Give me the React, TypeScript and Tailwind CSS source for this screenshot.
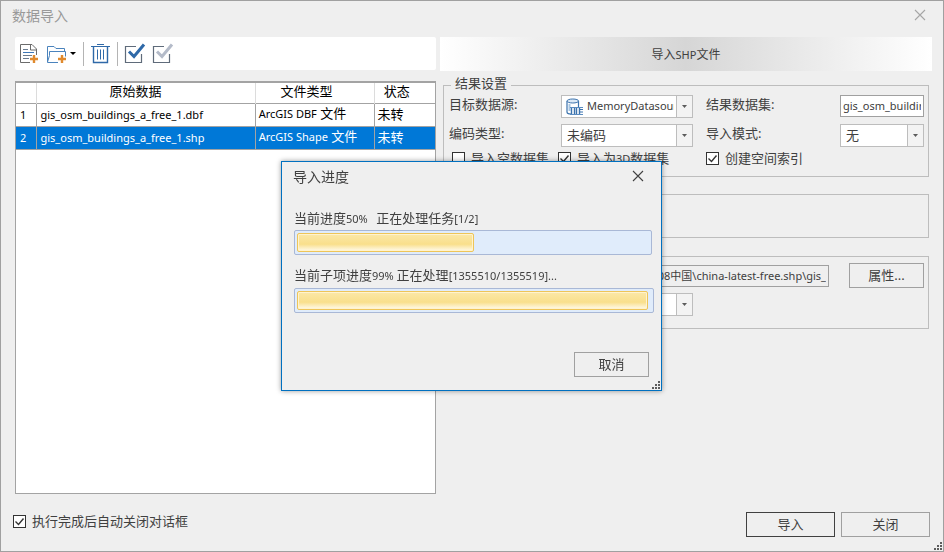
import type { ReactNode } from "react";

const ROWS = [
  { id: 1, name: "gis_osm_buildings_a_free_1.dbf", format: "ArcGIS DBF", state: "未转", selected: false },
  { id: 2, name: "gis_osm_buildings_a_free_1.shp", format: "ArcGIS Shape", state: "未转", selected: true },
];

function CloseIcon() {
  return (
    <svg width="12" height="12" viewBox="0 0 12 12" fill="none" stroke="currentColor" strokeWidth="1.1" aria-hidden="true">
      <path d="M1 1l10 10M11 1L1 11" />
    </svg>
  );
}

function AddFileIcon() {
  return (
    <svg width="22" height="22" viewBox="0 0 22 22" fill="none" aria-hidden="true">
      <path d="M12 19.5H2.5v-18H14L18.5 6v6" stroke="#6b6b6b" />
      <path d="M12.5 1.5v5.5h6" stroke="#6b6b6b" />
      <path d="M5 6.5h5M5 12.5h9M5 15.5h6" stroke="#6b7c90" />
      <path d="M5 9.5h11" stroke="#3d78b8" />
      <path d="M16 12v8M12 16h8" stroke="#e08a2e" strokeWidth="2.4" />
    </svg>
  );
}

function AddFolderIcon() {
  return (
    <svg width="22" height="22" viewBox="0 0 22 22" fill="none" aria-hidden="true">
      <path d="M12 19.5H1.5v-16h6.5l2 2h8.5V8" stroke="#4a83bd" />
      <path d="M1.5 19L3.5 12.5V8.5h16v5" stroke="#4a83bd" />
      <path d="M16 12v8M12 16h8" stroke="#e08a2e" strokeWidth="2.4" />
    </svg>
  );
}

function TrashIcon() {
  return (
    <svg width="22" height="22" viewBox="0 0 22 22" fill="none" stroke="#2f69a8" aria-hidden="true">
      <path d="M1 3.5h19M7 1.5h7" />
      <path d="M3.5 4v15.5h14V4" strokeWidth="1.4" />
      <path d="M7.5 6.5v10M10.5 6.5v10M13.5 6.5v10" />
    </svg>
  );
}

function TickBoxIcon({ tick }: { tick: string }) {
  return (
    <svg width="22" height="22" viewBox="0 0 22 22" fill="none" aria-hidden="true">
      <path d="M12 3.5H1.5v16h16V11" stroke="#5f6b7a" strokeWidth="1.2" />
      <path d="M5 8.5l5 5L20 1.5" stroke={tick} strokeWidth="3" />
    </svg>
  );
}

function DatabaseIcon() {
  return (
    <svg width="18" height="18" viewBox="0 0 18 18" fill="none" aria-hidden="true">
      <path d="M1 3v11c0 1 1 2 4 2" stroke="#3c73ad" strokeWidth="1.2" />
      <path d="M12.5 3v6" stroke="#3c73ad" strokeWidth="1.2" />
      <ellipse cx="6.8" cy="3" rx="5.8" ry="2" fill="#dce9f6" stroke="#3c73ad" />
      <path d="M3.5 6v7" stroke="#a9c6e2" strokeWidth="2" />
      <path d="M4 9.5h13M4 16.5h13" stroke="#5b8cc0" />
      <path d="M5.5 10v6M8.5 10v6M10.5 10v6M13.5 10v6" stroke="#3c73ad" strokeWidth="1.4" />
      <path d="M14 11.5h3M14 14h3" stroke="#3c73ad" />
    </svg>
  );
}

function Grip() {
  return (
    <svg className="absolute right-0 bottom-0" width="9" height="9" viewBox="0 0 9 9" fill="#5c5c5c" aria-hidden="true">
      <path d="M6 0h2v2H6zM3 3h2v2H3zM6 3h2v2H6zM0 6h2v2H0zM3 6h2v2H3zM6 6h2v2H6z" />
    </svg>
  );
}

function Check({ label, checked = false }: { label: ReactNode; checked?: boolean }) {
  return (
    <label className="flex items-center gap-[6px] text-[13px] leading-[13px] whitespace-nowrap">
      <span className="relative flex">
        <input
          type="checkbox"
          defaultChecked={checked}
          className="peer size-[13px] appearance-none border border-[#333333] bg-white"
        />
        <svg
          className="pointer-events-none invisible absolute inset-0 peer-checked:visible"
          width="13"
          height="13"
          viewBox="0 0 13 13"
          fill="none"
          stroke="#333333"
          strokeWidth="1.4"
          aria-hidden="true"
        >
          <path d="M2.5 6.5l3 3 5-6" />
        </svg>
      </span>
      {label}
    </label>
  );
}

function Combo({ id, label, value, icon, latin = false }: { id: string; label?: string; value: string; icon?: ReactNode; latin?: boolean }) {
  return (
    <div className="flex h-[23px] min-w-0 border border-[#bdbdbd] bg-white">
      {icon && <span className="flex shrink-0 items-center pl-1">{icon}</span>}
      <select
        id={id}
        aria-label={label}
        className={`mr-[2px] min-w-0 flex-1 appearance-none overflow-hidden bg-transparent pb-[2px] outline-none ${icon ? "pl-[3px]" : "pl-[5px]"} ${latin ? "text-[11px]" : "text-[13px]"}`}
      >
        <option>{value}</option>
      </select>
      <span className="pointer-events-none flex w-4 shrink-0 items-center justify-center border-l border-[#bdbdbd] bg-[#f3f3f3]">
        <svg width="5" height="3" viewBox="0 0 5 3" fill="#5c5c5c" aria-hidden="true">
          <path d="M0 0h5L2.5 3z" />
        </svg>
      </span>
    </div>
  );
}

function ProgressBar({ label, width, fill, now }: { label: string; width: string; fill: string; now: number }) {
  return (
    <div
      role="progressbar"
      aria-label={label}
      aria-valuenow={now}
      aria-valuemin={0}
      aria-valuemax={100}
      className={`flex h-[25px] rounded-[2px] border border-[#a9b8d6] bg-[#e0ecfb] p-[2px] ${width}`}
    >
      <div
        className={`rounded-[2px] border border-[#eec558] bg-linear-to-b from-[#fbe8a8] via-[#f9df8b] via-60% to-[#fffaea] shadow-[inset_0_0_0_1px_#fff3cf] ${fill}`}
      />
    </div>
  );
}

export default function App() {
  return (
    <div className="relative flex min-h-screen flex-col border border-[#a0a0a0] bg-[#efefef] pr-[11px] pl-[14px] font-['Noto_Sans','Noto_Sans_CJK_SC',sans-serif] text-[13px] text-[#404040]">
      <header className="-ml-[3px] flex h-9 items-start justify-between pt-[5px] text-[14px] leading-[20px] text-[#999999]">
        <h1>数据导入</h1>
        <button type="button" aria-label="关闭窗口" className="mt-[3px] mr-[6px] text-[#a6a6a6]">
          <CloseIcon />
        </button>
      </header>

      <main className="grid flex-1 grid-cols-[minmax(0,421fr)_minmax(0,492fr)] gap-1">
        <section className="flex flex-col">
          <div className="flex h-[33px] items-center rounded-[2px] bg-white pl-[3px]">
            <button type="button" aria-label="添加文件"><AddFileIcon /></button>
            <button type="button" aria-label="添加文件夹" className="ml-[6px] flex items-center gap-[2px]">
              <AddFolderIcon />
              <svg width="6" height="3" viewBox="0 0 6 3" aria-hidden="true"><path d="M0 0h6L3 3z" /></svg>
            </button>
            <span className="ml-[7px] h-6 w-px bg-[#b4b4b4]" />
            <button type="button" aria-label="删除" className="ml-[6px]"><TrashIcon /></button>
            <span className="ml-[5px] h-6 w-px bg-[#b4b4b4]" />
            <button type="button" aria-label="全选" className="ml-[6px]"><TickBoxIcon tick="#2f69a8" /></button>
            <button type="button" aria-label="反选" className="ml-[6px]"><TickBoxIcon tick="#b4bbc9" /></button>
          </div>

          <div className="mt-[11px] flex-1 border border-t-2 border-[#a3a3a3] bg-white">
            <table className="w-full table-fixed border-collapse text-left text-black">
              <colgroup>
                <col className="w-[20px]" />
                <col className="w-[52.3%]" />
                <col className="w-[28.4%]" />
                <col />
              </colgroup>
              <thead>
                <tr className="h-5 border-b border-[#a3a3a3] text-center leading-[17px]">
                  <th aria-label="序号" className="border-r border-[#dcdcdc] p-0" />
                  <th className="border-r border-[#dcdcdc] p-0 pr-5 pb-[2px] font-normal">原始数据</th>
                  <th className="border-r border-[#dcdcdc] p-0 pr-4 pb-[2px] font-normal">文件类型</th>
                  <th className="p-0 pr-4 pb-[2px] font-normal">状态</th>
                </tr>
              </thead>
              <tbody>
                {ROWS.map((row) => (
                  <tr
                    key={row.id}
                    className={`h-[23px] border-b border-[#a3a3a3] leading-[18px] whitespace-nowrap ${row.selected ? "bg-[#0078d7] text-white" : ""}`}
                  >
                    <td className="border-r border-[#a3a3a3] p-0 pl-1 text-[11px]">{row.id}</td>
                    <td className="border-r border-[#a3a3a3] p-0 pl-[4px] text-[11px]">{row.name}</td>
                    <td className="border-r border-[#a3a3a3] p-0 pl-[3px] pb-[2px]">
                      <span className="text-[11px]">{row.format}</span> 文件
                    </td>
                    <td className="p-0 pl-[3px] pb-[2px]">{row.state}</td>
                  </tr>
                ))}
              </tbody>
            </table>
          </div>
        </section>

        <section>
          <h2 className="flex h-[34px] items-center justify-center bg-linear-to-r from-white via-[#d6d6d6] to-white pt-[2px] text-[12px]">
            <span>导入<span className="text-[11px]">SHP</span>文件</span>
          </h2>

          <fieldset className="mx-[3px] mt-[5px] border border-[#bdbdbd] pr-1 pb-[11px] pl-[5px]">
            <legend className="ml-[2px] px-1 pb-[4px] leading-[15px]">结果设置</legend>
            <div className="grid grid-cols-[112px_minmax(0,132fr)_147px_minmax(0,84fr)] gap-y-[6px] leading-[18px]">
              <label htmlFor="datasource">目标数据源:</label>
              <Combo id="datasource" value="MemoryDatasource" icon={<DatabaseIcon />} latin />
              <label htmlFor="dataset" className="pl-[13px]">结果数据集:</label>
              <input
                id="dataset"
                defaultValue="gis_osm_buildings_a_free_1"
                className="h-[22px] w-full border border-[#a0a0a0] bg-white px-[2px] pb-[2px] text-[11px] outline-none"
              />
              <label htmlFor="encoding">编码类型:</label>
              <Combo id="encoding" value="未编码" />
              <label htmlFor="mode" className="pl-[13px]">导入模式:</label>
              <Combo id="mode" value="无" />
            </div>
            <div className="mt-[5px] grid grid-cols-[106px_minmax(0,1fr)_218px] pl-[3px]">
              <Check label="导入空数据集" />
              <Check label={<span>导入为<span className="text-[11px]">3D</span>数据集</span>} checked />
              <Check label="创建空间索引" checked />
            </div>
          </fieldset>

          <div className="mx-[3px] mt-[17px] h-11 border border-[#bdbdbd]" />

          <div className="mx-[3px] mt-[18px] border border-[#bdbdbd] pt-[6px] pr-1 pb-3 pl-[117px]">
            <div className="flex items-center gap-5">
              <input
                aria-label="源文件路径"
                readOnly
                value="08中国\china-latest-free.shp\gis_"
                className="h-[22px] min-w-0 flex-1 border border-[#a0a0a0] px-[2px] pb-[2px] text-right text-[11px] outline-none"
              />
              <button type="button" className="h-[25px] w-[75px] border border-[#a0a0a0]">属性...</button>
            </div>
            <div className="mt-[5px] w-[132px]">
              <Combo id="source-charset" label="源文件字符集" value="UTF-8" latin />
            </div>
          </div>
        </section>
      </main>

      <footer className="-ml-[2px] flex items-start justify-between pt-[18px] pb-[14px]">
        <div className="pt-[3px]">
          <Check label="执行完成后自动关闭对话框" checked />
        </div>
        <div className="flex gap-[6px] pr-[2px]">
          <button type="button" className="h-[25px] w-[89px] border border-[#404040]">导入</button>
          <button type="button" className="h-[25px] w-[89px] border border-[#a0a0a0]">关闭</button>
        </div>
      </footer>
      <Grip />

      <div className="fixed inset-0 flex items-center justify-center pr-px">
        <div
          role="dialog"
          aria-labelledby="progress-title"
          className="relative flex h-[230px] w-[381px] flex-col border border-[#0070c0] bg-[#efefef] px-3 shadow-[0_0_5px_rgba(0,0,0,0.4)]"
        >
          <div className="flex items-start justify-between pt-[5px] text-[14px] leading-[20px]">
            <h2 id="progress-title" className="-ml-px">导入进度</h2>
            <button type="button" aria-label="关闭进度窗口" className="mt-[3px] mr-[5px]">
              <CloseIcon />
            </button>
          </div>
          <p className="mt-[21px] pb-px leading-[20px] whitespace-pre">
            当前进度<span className="text-[11px]">50%{"   "}</span>正在处理任务<span className="text-[11px]">[1/2]</span>
          </p>
          <ProgressBar label="当前进度" width="w-[358px]" fill="w-[177px]" now={50} />
          <p className="mt-[10px] pb-[2px] leading-[20px] whitespace-pre">
            当前子项进度<span className="text-[11px]">99% </span>正在处理<span className="text-[11px]">[1355510/1355519]...</span>
          </p>
          <ProgressBar label="当前子项进度" width="w-[360px]" fill="w-[351px]" now={99} />
          <button type="button" className="mt-auto mb-[13px] h-[25px] w-[75px] self-end border border-[#a0a0a0]">
            取消
          </button>
          <Grip />
        </div>
      </div>
    </div>
  );
}
